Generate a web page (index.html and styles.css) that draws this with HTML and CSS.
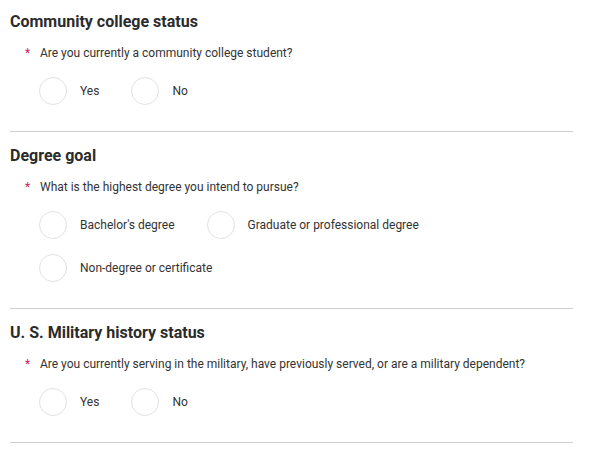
FILE: index.html
```html
<!DOCTYPE html>
<html lang="en">
<head>
<meta charset="utf-8">
<title>Form</title>
<link rel="stylesheet" href="styles.css">
</head>
<body>
<form class="form">
  <section class="section first">
    <h2 class="heading">Community college status</h2>
    <p class="question"><span class="req">*</span>Are you currently a community college student?</p>
    <div class="options">
      <label class="option"><span class="radio"></span><span class="label">Yes</span></label>
      <label class="option"><span class="radio"></span><span class="label">No</span></label>
    </div>
  </section>
  <section class="section">
    <h2 class="heading">Degree goal</h2>
    <p class="question"><span class="req">*</span>What is the highest degree you intend to pursue?</p>
    <div class="options">
      <label class="option"><span class="radio"></span><span class="label">Bachelor's degree</span></label>
      <label class="option"><span class="radio"></span><span class="label">Graduate or professional degree</span></label>
      <label class="option"><span class="radio"></span><span class="label">Non-degree or certificate</span></label>
    </div>
  </section>
  <section class="section">
    <h2 class="heading">U. S. Military history status</h2>
    <p class="question"><span class="req">*</span>Are you currently serving in the military, have previously served, or are a military dependent?</p>
    <div class="options">
      <label class="option"><span class="radio"></span><span class="label">Yes</span></label>
      <label class="option"><span class="radio"></span><span class="label">No</span></label>
    </div>
  </section>
</form>
</body>
</html>
```
FILE: styles.css
```css
html, body {
  margin: 0;
  padding: 0;
  background: #fff;
}
body {
  font-family: Roboto, "Liberation Sans", Arial, sans-serif;
  color: #333;
}
.form {
  padding: 0 16px 0 10px;
}
.section {
  border-bottom: 1px solid #cfcfcf;
  padding: 14px 0 26px;
}
.section.first {
  padding-top: 12px;
}
.heading {
  margin: 0;
  font-size: 16px;
  line-height: 20px;
  font-weight: 700;
  color: #2b2b2b;
}
.question {
  margin: 13px 0 0 15px;
  font-size: 12px;
  line-height: 16px;
  display: flex;
  color: #333;
}
.req {
  color: #c8235a;
  width: 15px;
  flex: none;
}
.options {
  margin: 16px 0 0 29px;
  display: flex;
  flex-wrap: wrap;
  row-gap: 15px;
  max-width: 420px;
}
.option {
  display: flex;
  align-items: center;
  margin-right: 32px;
  font-size: 12px;
  color: #333;
}
.radio {
  width: 28px;
  height: 28px;
  box-sizing: border-box;
  border: 1.5px solid #e2e2e2;
  border-radius: 50%;
  background: #fff;
  margin-right: 13px;
  flex: none;
}
```
